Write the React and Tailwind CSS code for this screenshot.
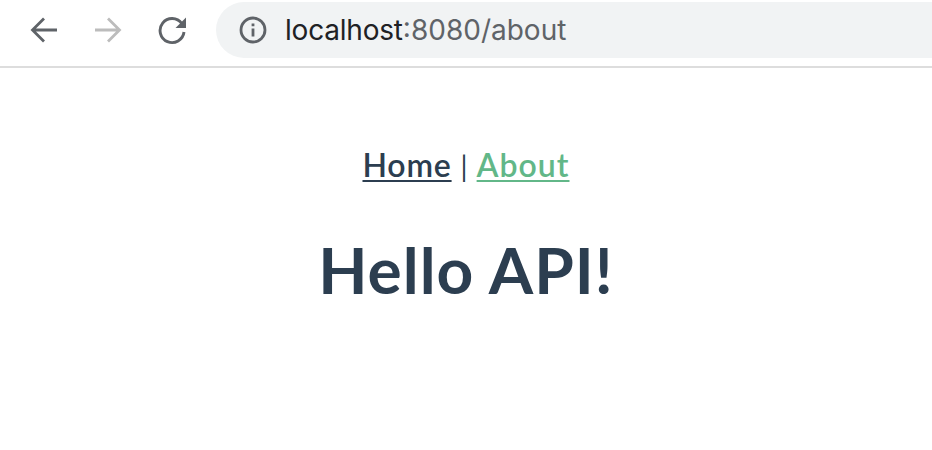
export default function App() {
  return (
    <div className="w-[932px] h-[450px] overflow-hidden bg-white">
      {/* toolbar */}
      <div className="flex items-start h-[68px] border-b-2 border-[#dddddd] pt-[2px]">
        <div className="flex items-center h-[56px] w-[216px] shrink-0 pl-[30px]">
          <svg width="28" height="28" viewBox="0 0 28 28" fill="none" stroke="#5f6368" strokeWidth="2.8">
            <path d="M27 14H3M14 2.5 2.5 14 14 25.500" />
          </svg>
          <svg className="ml-[36px]" width="28" height="28" viewBox="0 0 28 28" fill="none" stroke="#bcbcbc" strokeWidth="2.8">
            <path d="M1 14H25M14 2.500 25.500 14 14 25.500" />
          </svg>
          <svg className="ml-[36px]" width="30" height="30" viewBox="0 0 30 30" fill="none">
            <path d="M23.800 8.500A12 12 0 1 0 26 17" stroke="#5f6368" strokeWidth="2.900" />
            <path d="M28 2.500V13H17.500Z" fill="#5f6368" />
          </svg>
        </div>
        <div className="flex items-center h-[56px] flex-1 bg-[#f1f3f4] rounded-l-[28px] pl-[23px]">
          <svg width="28" height="28" viewBox="0 0 28 28" fill="none">
            <circle cx="14" cy="14" r="12" stroke="#5f6368" strokeWidth="2.800" />
            <path d="M12.600 12.500h2.800v8h-2.800zM12.600 7.500h2.800v2.800h-2.800z" fill="#5f6368" />
          </svg>
          <div className="ml-[18px] text-[28px] font-['Inter',sans-serif] tracking-[-0.2px] text-[#202124]">
            localhost<span className="text-[#5f6368] tracking-[0px]">:8080/about</span>
          </div>
        </div>
      </div>

      {/* page */}
      <div className="flex flex-col items-center font-['Lato',sans-serif] text-[#2c3e50]">
        <div className="mt-[76px] text-[32px] leading-[42px] font-semibold">
          <span className="underline underline-offset-[3px] decoration-2 tracking-[0.8px]">Home</span>
          <span className="font-normal ml-[9px] mr-[9px] text-[28px]">|</span>
          <span className="underline underline-offset-[3px] decoration-2 text-[#62b788] tracking-[1px]">About</span>
        </div>
        <h1 className="mt-[43px] text-[64px] leading-[80px] font-bold tracking-[1px]">Hello API!</h1>
      </div>
    </div>
  );
}
